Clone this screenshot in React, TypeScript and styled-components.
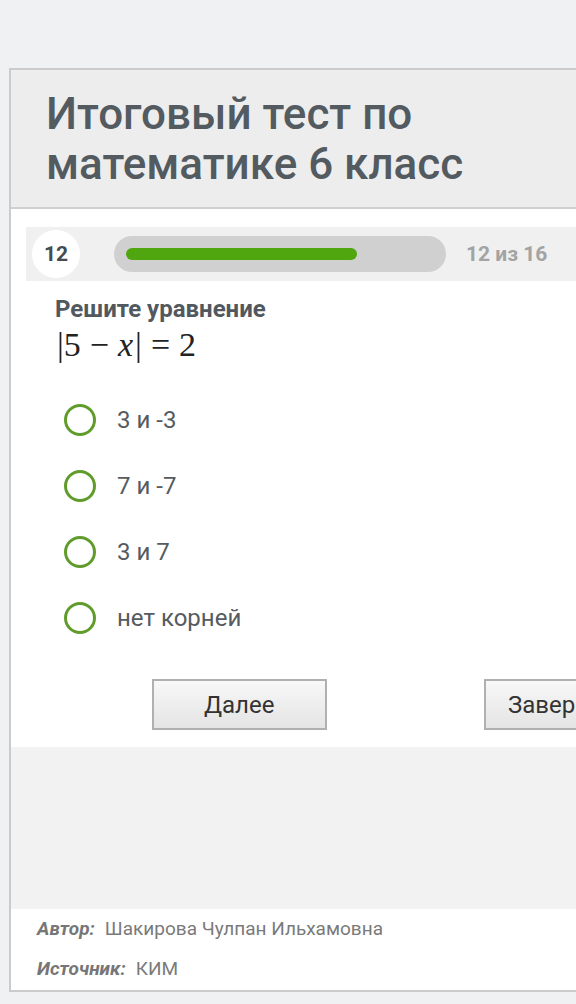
import styled, { createGlobalStyle } from "styled-components"

const GlobalStyle = createGlobalStyle`
  html, body {
    margin: 0;
    padding: 0;
    background: #eff1f2;
    overflow: hidden;
    font-family: Roboto, "Liberation Sans", Arial, sans-serif;
  }
`

const Page = styled.div`
  padding: 68px 0 0 9px;
  height: 1004px;
  box-sizing: border-box;
`

const Card = styled.div`
  width: 660px;
  border: 2px solid #cbcbcb;
  border-right: none;
  background: #ffffff;
`

const Header = styled.div`
  background: #ededed;
  border-bottom: 2px solid #cfcfcf;
  padding: 19px 0 18px 35px;
`

const Title = styled.h1`
  margin: 0;
  font-size: 44px;
  line-height: 50px;
  font-weight: 500;
  color: #535b61;
`

const Body = styled.div`
  padding: 18px 0 0 15px;
  height: 538px;
  box-sizing: border-box;
`

const ProgressRow = styled.div`
  display: flex;
  align-items: center;
  height: 54px;
  background: #f0f0f0;
  padding-left: 6px;
`

const Counter = styled.div`
  width: 48px;
  height: 48px;
  border-radius: 50%;
  background: #ffffff;
  display: flex;
  align-items: center;
  justify-content: center;
  font-size: 21px;
  font-weight: 700;
  color: #454b50;
`

const Track = styled.div`
  margin-left: 34px;
  width: 332px;
  height: 36px;
  border-radius: 18px;
  background: #d0d0d0;
  padding: 0 12px;
  box-sizing: border-box;
  display: flex;
  align-items: center;
`

const Fill = styled.div`
  height: 12px;
  border-radius: 6px;
  background: #4fa60f;
`

const ProgressLabel = styled.div`
  margin-left: 20px;
  font-size: 21px;
  font-weight: 700;
  color: #a3a3a3;
`

const Question = styled.div`
  padding: 14px 0 0 29px;
`

const Prompt = styled.div`
  font-size: 24px;
  font-weight: 700;
  color: #51595f;
  line-height: 28px;
`

const Formula = styled.div`
  font-family: "Liberation Serif", "DejaVu Serif", serif;
  font-size: 34px;
  line-height: 40px;
  color: #222;
  padding-left: 2px;
  margin-top: 2px;
`

const Var = styled.i`
  font-style: italic;
  margin-right: 2px;
`

const Op = styled.span`
  margin: 0 9px;
`

const Options = styled.div`
  display: flex;
  flex-direction: column;
  gap: 34px;
  padding: 39px 0 0 38px;
`

const Option = styled.label`
  display: flex;
  align-items: center;
  height: 32px;
  font-size: 24px;
  color: #555b60;
  cursor: pointer;
`

const Radio = styled.span`
  width: 26px;
  height: 26px;
  border: 3px solid #609c2c;
  border-radius: 50%;
  margin-right: 21px;
  flex-shrink: 0;
`

const Buttons = styled.div`
  display: flex;
  gap: 157px;
  padding: 45px 0 0 126px;
`

const Button = styled.button`
  width: 175px;
  height: 51px;
  border: 2px solid #b0b0b0;
  background: linear-gradient(#f8f8f8, #e4e4e4);
  font-family: Roboto, "Liberation Sans", Arial, sans-serif;
  font-size: 24px;
  color: #333;
  text-align: left;
  padding-left: 50px;
  white-space: nowrap;
  flex-shrink: 0;
  cursor: pointer;
`

const Spacer = styled.div`
  height: 162px;
  background: #f2f2f2;
`

const Footer = styled.div`
  padding: 6px 0 7px 26px;
  display: flex;
  flex-direction: column;
  gap: 12px;
`

const Meta = styled.div`
  font-size: 19px;
  line-height: 28px;
  color: #7a7a7a;
`

const MetaKey = styled.b`
  font-style: italic;
  margin-right: 10px;
  color: #767676;
`

const answers = ["3 и -3", "7 и -7", "3 и 7", "нет корней"]

export default function App() {
  return (
    <>
      <GlobalStyle />
      <Page>
        <Card>
          <Header>
            <Title>
              Итоговый тест по
              <br />
              математике 6 класс
            </Title>
          </Header>
          <Body>
            <ProgressRow>
              <Counter>12</Counter>
              <Track>
                <Fill style={{ width: `${(12 / 16) * 100}%` }} />
              </Track>
              <ProgressLabel>12 из 16</ProgressLabel>
            </ProgressRow>
            <Question>
              <Prompt>Решите уравнение</Prompt>
              <Formula>
                |5<Op>−</Op>
                <Var>x</Var>|<Op>=</Op>2
              </Formula>
            </Question>
            <Options>
              {answers.map((a) => (
                <Option key={a}>
                  <Radio />
                  {a}
                </Option>
              ))}
            </Options>
            <Buttons>
              <Button>Далее</Button>
              <Button style={{ paddingLeft: 22 }}>Завершить</Button>
            </Buttons>
          </Body>
          <Spacer />
          <Footer>
            <Meta>
              <MetaKey>Автор:</MetaKey>Шакирова Чулпан Ильхамовна
            </Meta>
            <Meta>
              <MetaKey>Источник:</MetaKey>КИМ
            </Meta>
          </Footer>
        </Card>
      </Page>
    </>
  )
}
